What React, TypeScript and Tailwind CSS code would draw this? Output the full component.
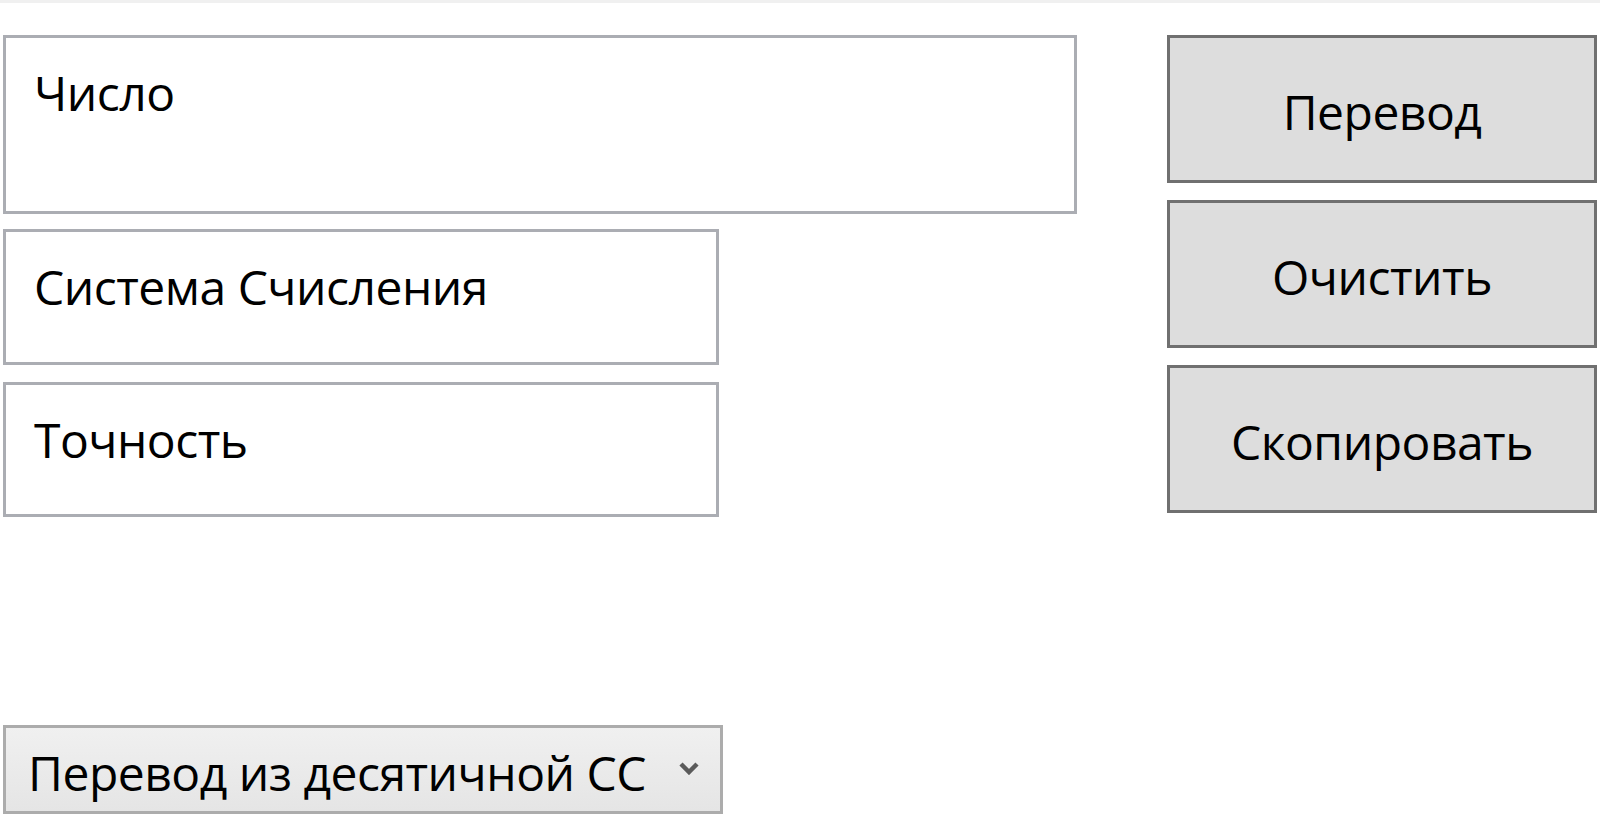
import React from 'react';

const font = { fontFamily: '"Open Sans", "Noto Sans", sans-serif' };

function Field({ label, className }: { label: string; className: string }) {
  return (
    <div className={`border-[3px] border-[#abadb3] bg-white pl-[28px] pt-[19px] text-[48px] tracking-[-0.5px] text-black ${className}`}>
      {label}
    </div>
  );
}

function Btn({ label }: { label: string }) {
  return (
    <button className="flex h-[148px] w-full items-center justify-center border-[3px] border-[#707070] bg-[#dddddd] pt-[6px] text-[48px] tracking-[-0.5px] text-black">
      {label}
    </button>
  );
}

export default function App() {
  return (
    <div className="flex h-[840px] w-full flex-col bg-white" style={font}>
      <div className="h-[3px] w-full bg-[#f0f0f0]" />
      <div className="flex flex-1 flex-col pl-[3px] pt-[32px]">
        <div className="flex justify-between pr-[3px]">
          <div className="flex w-[1074px] flex-col">
            <Field label="Число" className="h-[179px] w-full" />
            <Field label="Система Счисления" className="mt-[15px] h-[136px] w-[716px]" />
            <Field label="Точность" className="mt-[17px] h-[135px] w-[716px]" />
          </div>
          <div className="flex w-[430px] flex-col gap-[17px]">
            <Btn label="Перевод" />
            <Btn label="Очистить" />
            <Btn label="Скопировать" />
          </div>
        </div>
        <div className="mt-[208px] flex h-[89px] w-[720px] items-center justify-between border-[3px] border-[#acacac] bg-gradient-to-b from-[#f0f0f0] to-[#e5e5e5] pl-[22px] pr-[21px] pt-[6px] text-[48px] tracking-[-0.5px] text-black">
          <span>Перевод из десятичной СС</span>
          <svg width="20" height="14" viewBox="0 0 20 14" className="mb-[10px]">
            <path d="M2 3 L10 11 L18 3" fill="none" stroke="#5a5a5a" strokeWidth="4.5" />
          </svg>
        </div>
      </div>
    </div>
  );
}
